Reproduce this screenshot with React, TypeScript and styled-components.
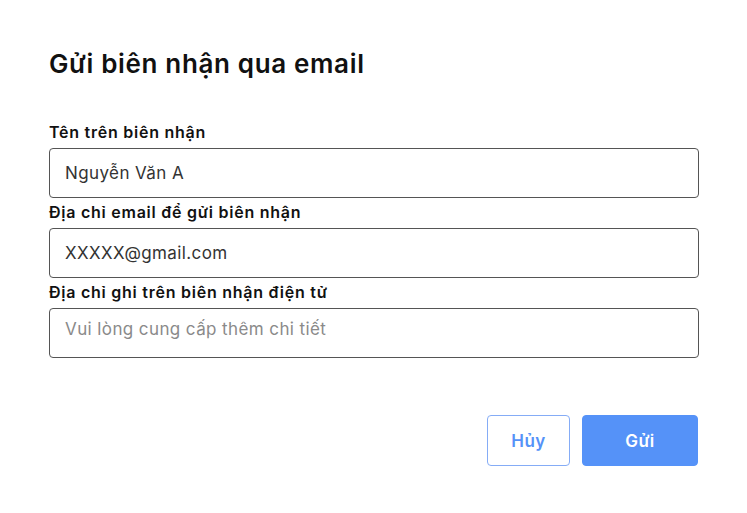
import React from "react";
import styled, { createGlobalStyle } from "styled-components";

const Global = createGlobalStyle`
  html, body { margin: 0; padding: 0; background: #ffffff; }
  body { font-family: Inter, "Noto Sans", sans-serif; color: #111; }
`;

const Dialog = styled.div`
  width: 747px;
  height: 513px;
  box-sizing: border-box;
  padding: 47px 49px 0 49px;
  display: flex;
  flex-direction: column;
`;

const Title = styled.h1`
  margin: 0;
  font-size: 26px;
  font-weight: 600;
  line-height: 34px;
  color: #111;
  letter-spacing: 0.65px;
`;

const Form = styled.div`
  margin-top: 40px;
  display: flex;
  flex-direction: column;
`;

const Field = styled.div`
  display: flex;
  flex-direction: column;
  margin-bottom: 3px;
`;

const Label = styled.label`
  font-size: 16px;
  font-weight: 600;
  line-height: 22px;
  color: #111;
  letter-spacing: 0.75px;
  margin-bottom: 5px;
`;

const Input = styled.input<{ $tall?: boolean }>`
  box-sizing: border-box;
  width: 650px;
  height: 50px;
  border: 1px solid #555;
  border-radius: 4px;
  padding: ${(p) => (p.$tall ? "0 15px 8px" : "0 15px")};
  font-family: inherit;
  font-size: 17px;
  letter-spacing: 0.4px;
  color: #333;
  outline: none;
  &::placeholder { color: #8a8a8a; }
`;

const Actions = styled.div`
  margin-top: 54px;
  display: flex;
  justify-content: flex-end;
  gap: 12px;
`;

const Button = styled.button<{ $primary?: boolean }>`
  height: 51px;
  border-radius: 4px;
  font-family: inherit;
  font-size: 17px;
  font-weight: 600;
  letter-spacing: 0.5px;
  cursor: pointer;
  width: ${(p) => (p.$primary ? "116px" : "83px")};
  background: ${(p) => (p.$primary ? "#5592f8" : "#ffffff")};
  color: ${(p) => (p.$primary ? "#ffffff" : "#5592f8")};
  border: 1px solid ${(p) => (p.$primary ? "#5592f8" : "#85acf6")};
`;

export default function App() {
  return (
    <>
      <Global />
      <Dialog>
        <Title>Gửi biên nhận qua email</Title>
        <Form>
          <Field>
            <Label>Tên trên biên nhận</Label>
            <Input defaultValue="Nguyễn Văn A" />
          </Field>
          <Field>
            <Label>Địa chỉ email để gửi biên nhận</Label>
            <Input defaultValue="XXXXX@gmail.com" />
          </Field>
          <Field>
            <Label>Địa chỉ ghi trên biên nhận điện tử</Label>
            <Input $tall placeholder="Vui lòng cung cấp thêm chi tiết" />
          </Field>
        </Form>
        <Actions>
          <Button>Hủy</Button>
          <Button $primary>Gửi</Button>
        </Actions>
      </Dialog>
    </>
  );
}
